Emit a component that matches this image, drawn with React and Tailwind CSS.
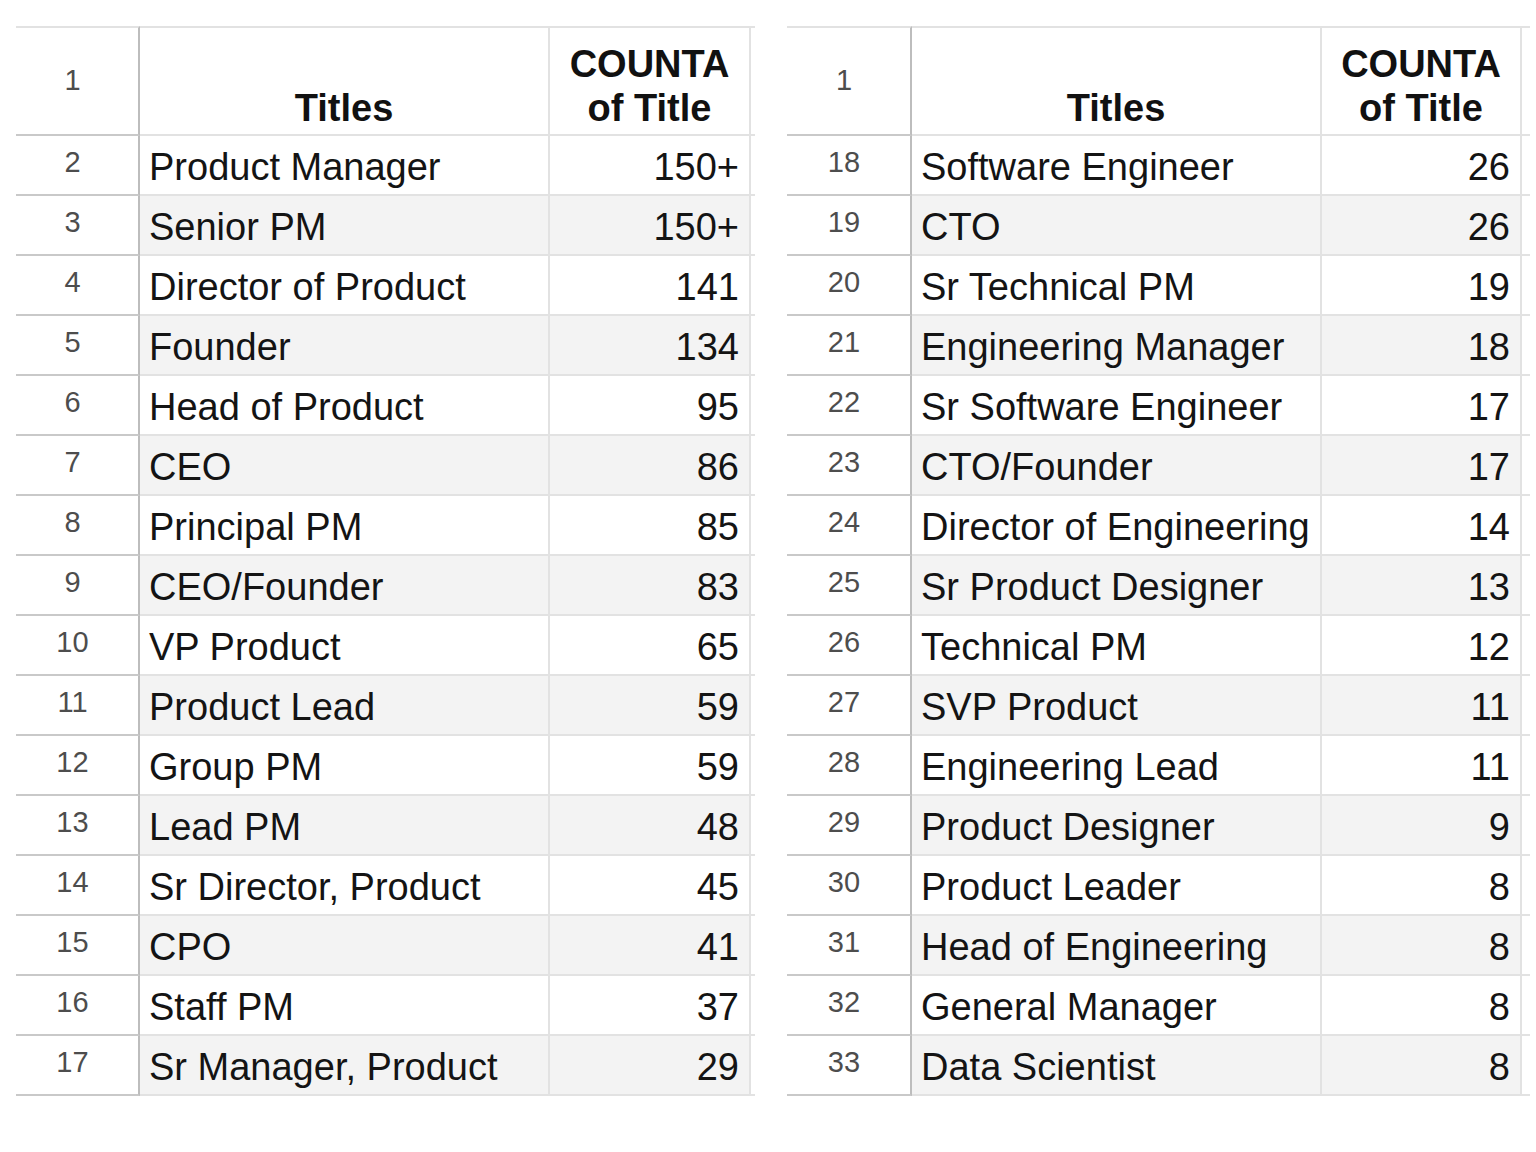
import React from "react";

const left = [
  [2, "Product Manager", "150+"],
  [3, "Senior PM", "150+"],
  [4, "Director of Product", "141"],
  [5, "Founder", "134"],
  [6, "Head of Product", "95"],
  [7, "CEO", "86"],
  [8, "Principal PM", "85"],
  [9, "CEO/Founder", "83"],
  [10, "VP Product", "65"],
  [11, "Product Lead", "59"],
  [12, "Group PM", "59"],
  [13, "Lead PM", "48"],
  [14, "Sr Director, Product", "45"],
  [15, "CPO", "41"],
  [16, "Staff PM", "37"],
  [17, "Sr Manager, Product", "29"],
];

const right = [
  [18, "Software Engineer", "26"],
  [19, "CTO", "26"],
  [20, "Sr Technical PM", "19"],
  [21, "Engineering Manager", "18"],
  [22, "Sr Software Engineer", "17"],
  [23, "CTO/Founder", "17"],
  [24, "Director of Engineering", "14"],
  [25, "Sr Product Designer", "13"],
  [26, "Technical PM", "12"],
  [27, "SVP Product", "11"],
  [28, "Engineering Lead", "11"],
  [29, "Product Designer", "9"],
  [30, "Product Leader", "8"],
  [31, "Head of Engineering", "8"],
  [32, "General Manager", "8"],
  [33, "Data Scientist", "8"],
];

const Sheet = ({ rows, numW, countW, stubW }) => (
  <div className="flex flex-col">
    {/* header row */}
    <div className="flex h-[110px]">
      <div
        className={`${numW} flex items-center justify-center pr-[9px] border-t-2 border-b-2 border-r-2 border-t-[#e2e2e2] border-b-[#c9c9c9] border-r-[#bdbdbd] text-[29px] text-[#4d4d4d]`}
      >
        1
      </div>
      <div className="w-[410px] flex items-end justify-center pb-[4px] border-t-2 border-b-2 border-r-2 border-[#e2e2e2] text-[38px] leading-[44px] font-bold text-[#111]">
        Titles
      </div>
      <div
        className={`${countW} flex flex-col items-center justify-end pb-[4px] border-t-2 border-b-2 border-r-2 border-[#e2e2e2] text-[38px] leading-[44px] font-bold text-[#111]`}
      >
        <span>COUNTA</span>
        <span>of Title</span>
      </div>
      <div className={`${stubW} border-t-2 border-b-2 border-[#e2e2e2]`}></div>
    </div>

    {rows.map(([n, title, count]) => {
      const shade = n % 2 === 1 ? "bg-[#f3f3f3]" : "bg-white";
      return (
        <div key={n} className="flex h-[60px]">
          <div
            className={`${numW} flex items-center justify-center pr-[9px] pb-[5px] border-b-2 border-r-2 border-b-[#c9c9c9] border-r-[#bdbdbd] text-[29px] text-[#4d4d4d]`}
          >
            {n}
          </div>
          <div
            className={`w-[410px] flex items-center pl-[9px] pt-[3px] border-b-2 border-r-2 border-[#e2e2e2] ${shade} text-[38px] leading-none text-[#141414] whitespace-nowrap`}
          >
            {title}
          </div>
          <div
            className={`${countW} flex items-center justify-end pr-[10px] pt-[3px] border-b-2 border-r-2 border-[#e2e2e2] ${shade} text-[38px] leading-none text-[#141414]`}
          >
            {count}
          </div>
          <div className={`${stubW} border-b-2 border-[#e2e2e2]`}></div>
        </div>
      );
    })}
  </div>
);

export default function App() {
  return (
    <div
      className="w-[1536px] h-[1152px] bg-white pt-[26px] pl-[16px] flex items-start gap-[32px]"
      style={{ fontFamily: '"Liberation Sans", Arial, sans-serif' }}
    >
      <Sheet rows={left} numW="w-[124px]" countW="w-[201px]" stubW="w-[4px]" />
      <Sheet rows={right} numW="w-[125px]" countW="w-[200px]" stubW="w-[8px]" />
    </div>
  );
}
